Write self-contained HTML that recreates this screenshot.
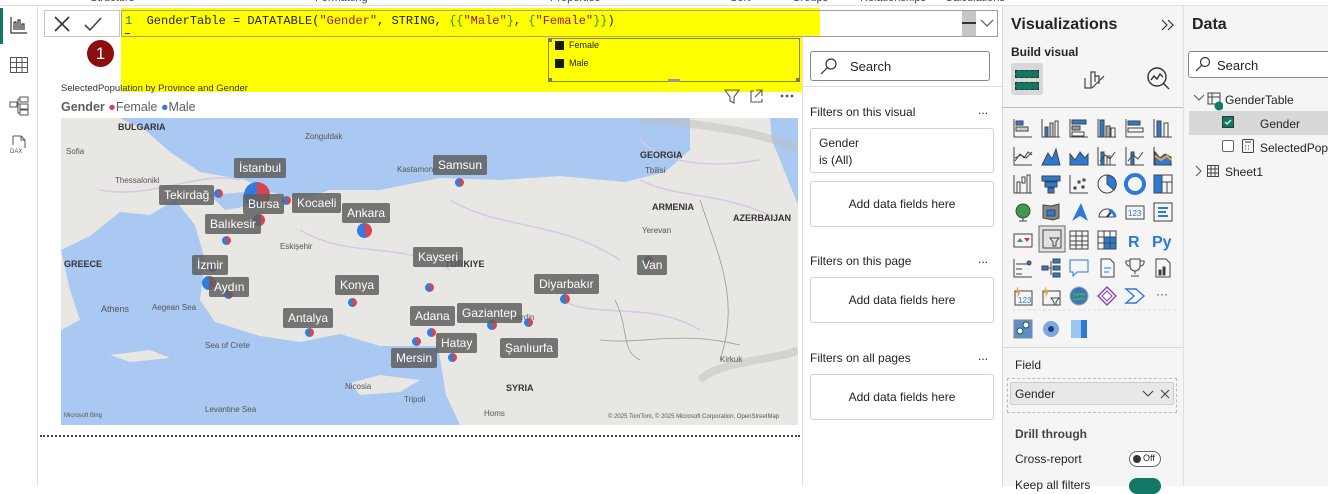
<!DOCTYPE html>
<html><head><meta charset="utf-8">
<style>
*{box-sizing:border-box;margin:0;padding:0}
body{width:1328px;height:486px;overflow:hidden;background:#fff;font-family:"Liberation Sans",sans-serif;position:relative;color:#252423}
.a{position:absolute}
.t{font-size:12px;white-space:nowrap}
.card{position:absolute;left:810px;width:184px;background:#fff;border:1px solid #d1d1d1;border-radius:3px;font-size:12px}
.add{text-align:center;line-height:44px}
.lbl{position:absolute;background:rgba(95,95,95,.85);color:#fff;font-size:12px;padding:3px 5px;border-radius:2px;white-space:nowrap}
.pie{position:absolute;width:9px;height:9px;border-radius:50%;background:conic-gradient(#d64550 0 45%,#2f7de1 45% 100%)}
.mt{position:absolute;font-size:8px;color:#555;white-space:nowrap}
.ic{position:absolute;width:22px;height:22px}
</style></head><body>
<!-- top ribbon remnant -->
<div class="a" style="left:0;top:0;width:1328px;height:6px;background:#fff;border-bottom:1px solid #e1dfdd"></div>
<div class="a t" style="left:90px;top:-8px;font-size:11px;color:#444">Structure</div>
<div class="a t" style="left:315px;top:-8px;font-size:11px;color:#444">Formatting</div>
<div class="a t" style="left:550px;top:-8px;font-size:11px;color:#444">Properties</div>
<div class="a t" style="left:730px;top:-8px;font-size:11px;color:#444">Sort</div>
<div class="a t" style="left:792px;top:-8px;font-size:11px;color:#444">Groups</div>
<div class="a t" style="left:860px;top:-8px;font-size:11px;color:#444">Relationships</div>
<div class="a t" style="left:945px;top:-8px;font-size:11px;color:#444">Calculations</div>

<!-- left nav -->
<div class="a" style="left:0;top:6px;width:38px;height:480px;background:#fff;border-right:1px solid #e1dfdd"></div>
<div class="a" style="left:0;top:8px;width:3px;height:36px;background:#117865"></div>
<svg class="a" style="left:10px;top:16px" width="18" height="18" viewBox="0 0 18 18" fill="none" stroke="#333" stroke-width="1.2"><path d="M1 1v16h16M4 14V6M4 6h2v8M8 14V4h2v10M12 14V8h2v6"/></svg>
<svg class="a" style="left:10px;top:57px" width="18" height="16" viewBox="0 0 18 16" fill="none" stroke="#555" stroke-width="1"><rect x=".5" y=".5" width="17" height="15"/><path d="M.5 5.5h17M.5 10.5h17M6.5 .5v15M12 .5v15"/></svg>
<svg class="a" style="left:9px;top:96px" width="20" height="20" viewBox="0 0 20 20" fill="none" stroke="#555" stroke-width="1"><rect x="1" y="6" width="7" height="5"/><rect x="11" y="1" width="8" height="5"/><rect x="11" y="8" width="8" height="5"/><rect x="11" y="14" width="8" height="5"/><path d="M8 8h3M9 8V3h2M9 8v9h2"/></svg>
<svg class="a" style="left:9px;top:135px" width="20" height="20" viewBox="0 0 20 20" fill="none" stroke="#555" stroke-width="1"><path d="M4 1h8l4 4v8M4 1v9M12 1v4h4"/><text x="1" y="18" font-size="6" fill="#555" stroke="none" font-family="Liberation Sans">DAX</text></svg>

<!-- formula bar -->
<div class="a" style="left:44px;top:10px;width:76px;height:27px;border:1px solid #c8c6c4;background:#fff"></div>
<svg class="a" style="left:52px;top:14px" width="60" height="20" viewBox="0 0 60 20" fill="none" stroke="#333" stroke-width="1.6"><path d="M3 3l14 14M17 3L3 17"/><path d="M33 11l5 5 11-12" stroke="#444"/></svg>
<div class="a" style="left:121px;top:8px;width:699px;height:84px;background:#ffff00"></div>
<div class="a" style="left:121px;top:10px;width:877px;height:27px;border:1px solid #a19f9d"></div>
<div class="a" style="left:820px;top:11px;width:177px;height:25px;background:#fff"></div>
<div class="a" style="left:962px;top:11px;width:14px;height:25px;background:#c8c6c4"></div>
<div class="a" style="left:962px;top:22px;width:14px;height:2px;background:#333"></div>
<svg class="a" style="left:980px;top:18px" width="14" height="10"><path d="M1 2l6 6 6-6" fill="none" stroke="#555" stroke-width="1.2"/></svg>
<div class="a" style="left:125px;top:14px;font-family:'Liberation Mono',monospace;font-size:12px;white-space:nowrap;color:#222"><span style="color:#237893">1</span>&nbsp; GenderTable = DATATABLE(<span style="color:#a31515">"Gender"</span>, STRING, <span style="color:#319331">{{</span><span style="color:#a31515">"Male"</span><span style="color:#319331">}</span>, <span style="color:#319331">{</span><span style="color:#a31515">"Female"</span><span style="color:#319331">}}</span>)</div>
<div class="a" style="left:125px;top:33px;width:5px;height:1px;background:#333"></div>
<!-- red marker -->
<div class="a" style="left:87px;top:40px;width:27px;height:27px;border-radius:50%;background:#8b0d0d;color:#fff;font-size:17px;text-align:center;line-height:27px">1</div>
<!-- slicer box -->
<div class="a" style="left:548px;top:38px;width:252px;height:44px;border:1px solid #8a8a00"></div>
<div class="a" style="left:548px;top:38px;width:4px;height:4px;background:#777"></div>
<div class="a" style="left:796px;top:78px;width:4px;height:4px;background:#777"></div>
<div class="a" style="left:548px;top:78px;width:4px;height:4px;background:#777"></div>
<div class="a" style="left:668px;top:79px;width:12px;height:3px;background:#999"></div>
<div class="a" style="left:555px;top:41px;width:9px;height:9px;background:#1a1a00"></div>
<div class="a t" style="left:569px;top:40px;font-size:9px">Female</div>
<div class="a" style="left:555px;top:59px;width:9px;height:9px;background:#1a1a00"></div>
<div class="a t" style="left:569px;top:58px;font-size:9px">Male</div>
<div class="a t" style="left:61px;top:83px;font-size:9.5px;color:#333">SelectedPopulation by Province and Gender</div>
<!-- visual header icons -->
<svg class="a" style="left:724px;top:88px" width="76" height="16" fill="none" stroke="#555" stroke-width="1.1"><path d="M1 2h14l-5 7v6l-4-2V9z"/><path d="M30 3h-3v11h11v-3M32 2h6v6M38 2l-7 7"/><circle cx="58" cy="8" r=".8" fill="#555"/><circle cx="63" cy="8" r=".8" fill="#555"/><circle cx="68" cy="8" r=".8" fill="#555"/></svg>
<div class="a t" style="left:61px;top:100px;font-size:12.5px;color:#605e5c"><b>Gender</b> <span style="color:#d64550">●</span>Female <span style="color:#2f7de1">●</span>Male</div>

<!-- map -->
<svg class="a" style="left:61px;top:118px" width="737" height="307" viewBox="61 118 737 307">
<rect x="61" y="118" width="737" height="307" fill="#e8e7e3"/>
<polygon fill="#a9c8f2" points="120,118 690,118 690,150 665,172 625,182 560,176 500,180 440,178 380,190 330,190 300,200 270,192 245,180 200,172 170,152 145,130"/>
<polygon fill="#a9c8f2" points="61,250 90,236 120,212 150,215 175,200 195,225 205,260 200,300 215,322 260,336 300,342 340,334 380,346 420,346 438,346 446,395 460,425 61,425 61,330 80,320 70,290"/>
<polygon fill="#e8e7e3" points="350,383 380,375 420,380 400,392 360,395"/>
<polygon fill="#e8e7e3" points="110,355 150,350 170,358 130,362"/>
<polygon fill="#a9c8f2" points="770,118 798,118 798,205 786,175 772,140"/>
<polygon fill="#a9c8f2" points="210,195 245,192 255,205 225,210"/>
<path d="M100,190 C150,200 200,170 240,180 M300,230 C350,260 400,240 450,270 M450,200 C500,230 560,220 620,260 M560,300 C600,320 650,300 700,330 M640,180 C680,200 720,190 780,220 M640,140 C660,160 700,170 760,160" stroke="#d6c8e6" stroke-width="1.5" fill="none"/>
<path d="M600,340 C640,345 680,330 740,345 M615,300 C630,330 620,350 640,360 M700,200 C720,260 740,300 720,360" stroke="#999" stroke-width=".8" fill="none"/>
<path d="M640,118 C700,125 760,130 798,150 M700,380 C720,360 780,360 798,350" stroke="#c0c0bd" stroke-width="8" fill="none" opacity=".5"/>
</svg>
<div class="mt" style="left:118px;top:122px;font-size:9px;color:#333;font-weight:bold">BULGARIA</div>
<div class="mt" style="left:640px;top:150px;font-size:9px;color:#333;font-weight:bold">GEORGIA</div>
<div class="mt" style="left:652px;top:202px;font-size:9px;color:#333;font-weight:bold">ARMENIA</div>
<div class="mt" style="left:733px;top:213px;font-size:9px;color:#333;font-weight:bold">AZERBAIJAN</div>
<div class="mt" style="left:64px;top:259px;font-size:9px;color:#333;font-weight:bold">GREECE</div>
<div class="mt" style="left:445px;top:259px;font-size:9px;color:#333;font-weight:bold">TÜRKIYE</div>
<div class="mt" style="left:506px;top:383px;font-size:9px;color:#333;font-weight:bold">SYRIA</div>
<div class="mt" style="left:66px;top:147px">Sofia</div><div class="mt" style="left:115px;top:176px">Thessaloniki</div>
<div class="mt" style="left:101px;top:304px;font-size:9px">Athens</div><div class="mt" style="left:152px;top:303px">Aegean Sea</div>
<div class="mt" style="left:205px;top:341px">Sea of Crete</div><div class="mt" style="left:205px;top:405px">Levantine Sea</div>
<div class="mt" style="left:345px;top:382px">Nicosia</div><div class="mt" style="left:404px;top:395px">Tripoli</div>
<div class="mt" style="left:645px;top:166px">Tbilisi</div><div class="mt" style="left:642px;top:226px">Yerevan</div>
<div class="mt" style="left:280px;top:242px">Eskişehir</div><div class="mt" style="left:397px;top:165px">Kastamonu</div>
<div class="mt" style="left:305px;top:132px">Zonguldak</div><div class="mt" style="left:720px;top:355px">Kirkuk</div>
<div class="mt" style="left:484px;top:409px">Homs</div><div class="mt" style="left:510px;top:313px">Mardin</div>
<div class="mt" style="left:64px;top:413px;font-size:6px">Microsoft Bing</div>
<div class="mt" style="left:608px;top:414px;font-size:6px">© 2025 TomTom, © 2025 Microsoft Corporation, OpenStreetMap</div>
<!-- pies -->
<div class="pie" style="left:244px;top:182px;width:26px;height:26px"></div>
<div class="pie" style="left:214px;top:189px"></div><div class="pie" style="left:282px;top:196px"></div>
<div class="pie" style="left:253px;top:214px;width:12px;height:12px"></div><div class="pie" style="left:222px;top:236px"></div>
<div class="pie" style="left:357px;top:223px;width:15px;height:15px"></div><div class="pie" style="left:455px;top:178px"></div>
<div class="pie" style="left:202px;top:276px;width:14px;height:14px"></div><div class="pie" style="left:208px;top:263px"></div>
<div class="pie" style="left:224px;top:290px"></div><div class="pie" style="left:348px;top:298px"></div>
<div class="pie" style="left:425px;top:283px"></div><div class="pie" style="left:305px;top:328px"></div>
<div class="pie" style="left:644px;top:256px"></div><div class="pie" style="left:560px;top:294px;width:10px;height:10px"></div>
<div class="pie" style="left:427px;top:328px"></div><div class="pie" style="left:487px;top:320px;width:10px;height:10px"></div>
<div class="pie" style="left:524px;top:318px"></div><div class="pie" style="left:412px;top:337px"></div>
<div class="pie" style="left:448px;top:353px"></div>
<!-- labels -->
<div class="lbl" style="left:234px;top:158px">İstanbul</div>
<div class="lbl" style="left:433px;top:155px">Samsun</div>
<div class="lbl" style="left:159px;top:185px">Tekirdağ</div>
<div class="lbl" style="left:243px;top:194px">Bursa</div>
<div class="lbl" style="left:292px;top:193px">Kocaeli</div>
<div class="lbl" style="left:342px;top:203px">Ankara</div>
<div class="lbl" style="left:205px;top:214px">Balıkesir</div>
<div class="lbl" style="left:413px;top:247px">Kayseri</div>
<div class="lbl" style="left:192px;top:255px">İzmir</div>
<div class="lbl" style="left:637px;top:255px">Van</div>
<div class="lbl" style="left:209px;top:277px">Aydın</div>
<div class="lbl" style="left:335px;top:275px">Konya</div>
<div class="lbl" style="left:534px;top:274px">Diyarbakır</div>
<div class="lbl" style="left:283px;top:308px">Antalya</div>
<div class="lbl" style="left:410px;top:306px">Adana</div>
<div class="lbl" style="left:457px;top:303px">Gaziantep</div>
<div class="lbl" style="left:436px;top:333px">Hatay</div>
<div class="lbl" style="left:500px;top:338px">Şanlıurfa</div>
<div class="lbl" style="left:391px;top:348px">Mersin</div>
<div class="a" style="left:40px;top:435px;width:760px;border-top:2px dotted #444"></div>

<!-- filters pane -->
<div class="a" style="left:802px;top:37px;width:200px;height:449px;background:#fff;border-left:1px solid #e1dfdd"></div>
<div class="a" style="left:810px;top:51px;width:180px;height:30px;border:1px solid #8a8886;border-radius:3px;background:#fff"></div>
<svg class="a" style="left:820px;top:57px" width="18" height="18" fill="none" stroke="#333" stroke-width="1.2"><circle cx="11" cy="7" r="5"/><path d="M7.5 10.5L1 17"/></svg>
<div class="a t" style="left:850px;top:59px;font-size:13px">Search</div>
<div class="a" style="left:803px;top:86px;width:199px;border-top:1px solid #e1dfdd"></div>
<div class="a t" style="left:810px;top:105px">Filters on this visual</div><div class="a t" style="left:978px;top:103px">...</div>
<div class="card" style="top:128px;height:45px;padding:6px 8px;line-height:17px">Gender<br>is (All)</div>
<div class="card add" style="top:181px;height:46px">Add data fields here</div>
<div class="a t" style="left:810px;top:254px">Filters on this page</div><div class="a t" style="left:978px;top:252px">...</div>
<div class="card add" style="top:277px;height:46px">Add data fields here</div>
<div class="a t" style="left:810px;top:351px">Filters on all pages</div><div class="a t" style="left:978px;top:349px">...</div>
<div class="card add" style="top:374px;height:46px">Add data fields here</div>

<!-- visualizations pane -->
<div class="a" style="left:1002px;top:6px;width:182px;height:480px;background:#f5f5f5;border-left:1px solid #d8d8d8;border-right:1px solid #e1dfdd"></div>
<div class="a t" style="left:1011px;top:16px;font-size:16px;font-weight:bold;color:#252423">Visualizations</div>
<svg class="a" style="left:1161px;top:19px" width="14" height="12" fill="none" stroke="#333" stroke-width="1.2"><path d="M1 1l5 5-5 5M7 1l5 5-5 5"/></svg>
<div class="a t" style="left:1011px;top:45px;font-size:12px;font-weight:bold">Build visual</div>
<div class="a" style="left:1011px;top:63px;width:32px;height:32px;background:#d8d8d8;border-radius:3px"></div>
<div class="a" style="left:1015px;top:70px;width:24px;height:8px;background:#117865;border:1px dashed #333"></div>
<div class="a" style="left:1015px;top:82px;width:24px;height:8px;background:#117865;border:1px dashed #333"></div>
<svg class="a" style="left:1082px;top:66px" width="24" height="26" fill="none" stroke="#444" stroke-width="1.2"><path d="M3 12v10h6V6h4v10M13 10h4v8M10 22l12-12"/></svg>
<svg class="a" style="left:1146px;top:66px" width="26" height="26" fill="none" stroke="#333" stroke-width="1.4"><circle cx="11" cy="11" r="9"/><path d="M17 17l6 6M5 14l3-4 3 3 3-5 3 3"/></svg>
<div class="a" style="left:1003px;top:107px;width:180px;border-top:1px solid #bdbdbd"></div>
<svg class="a" style="left:1003px;top:114px" width="180" height="228" fill="none" stroke="#444" stroke-width="1">
<g transform="translate(10,4)"><path d="M1 1v18h18"/><rect x="3" y="3" width="7" height="4" fill="#2b7bd4"/><rect x="3" y="9" width="12" height="4" fill="#ccc"/></g>
<g transform="translate(38,4)"><path d="M1 1v18h18"/><rect x="4" y="9" width="3" height="10" fill="#2b7bd4"/><rect x="9" y="5" width="3" height="14" fill="#ccc"/><rect x="14" y="3" width="3" height="16"/></g>
<g transform="translate(66,4)"><path d="M1 1v18h18"/><rect x="3" y="2" width="14" height="4" fill="#2b7bd4"/><rect x="3" y="8" width="8" height="4" fill="#999"/><rect x="3" y="14" width="12" height="4"/></g>
<g transform="translate(94,4)"><path d="M1 1v18h18"/><rect x="3" y="2" width="4" height="17" fill="#2b7bd4"/><rect x="9" y="8" width="4" height="11" fill="#aaa"/><rect x="14" y="10" width="4" height="9"/></g>
<g transform="translate(122,4)"><path d="M1 1v18h18"/><rect x="3" y="3" width="12" height="4" fill="#2b7bd4"/><rect x="3" y="10" width="15" height="4"/></g>
<g transform="translate(150,4)"><path d="M1 1v18h18"/><rect x="4" y="3" width="4" height="16" fill="#2b7bd4"/><rect x="11" y="5" width="4" height="14"/></g>
<g transform="translate(10,32)"><path d="M1 1v18h18M2 15l5-7 4 4 4-6 4 3M2 12l6-3 5 3 6-6"/></g>
<g transform="translate(38,32)"><path d="M1 19l6-12 4 6 4-10 4 16z" fill="#2b7bd4"/></g>
<g transform="translate(66,32)"><path d="M1 8l5 6 5-8 5 6 3-4v11H1z" fill="#2b7bd4"/></g>
<g transform="translate(94,32)"><path d="M1 1v18h18"/><rect x="4" y="6" width="3" height="13" fill="#2b7bd4"/><rect x="10" y="10" width="3" height="9"/><path d="M3 15l5-6 5 4 5-7"/></g>
<g transform="translate(122,32)"><path d="M1 1v18h18"/><rect x="6" y="6" width="3" height="13" fill="#2b7bd4"/><path d="M3 15l5-6 5 4 5-7"/></g>
<g transform="translate(150,32)"><path d="M1 1v18h18"/><path d="M2 6l5 6 5-4 6 3v8H2z" fill="#2b7bd4"/><path d="M2 10l6 4 6-4 4 4" stroke="#e8a33d" stroke-width="2"/></g>
<g transform="translate(10,60)"><path d="M1 1v18h18"/><rect x="4" y="8" width="3" height="11"/><rect x="9" y="3" width="3" height="6"/><rect x="14" y="1" width="3" height="18"/></g>
<g transform="translate(38,60)"><rect x="1" y="2" width="18" height="5" fill="#2b7bd4"/><rect x="4" y="8" width="12" height="5" fill="#2b7bd4"/><rect x="7" y="14" width="6" height="5" fill="#2b7bd4"/></g>
<g transform="translate(66,60)"><path d="M1 1v18h18"/><rect x="5" y="13" width="2" height="2" fill="#333"/><rect x="9" y="7" width="2" height="2" fill="#2b7bd4"/><rect x="14" y="5" width="2" height="2" fill="#2b7bd4"/><rect x="13" y="12" width="2" height="2" fill="#333"/></g>
<g transform="translate(94,60)"><circle cx="10" cy="10" r="9"/><path d="M10 1a9 9 0 0 1 7 15l-7-6z" fill="#2b7bd4"/></g>
<g transform="translate(122,60)"><circle cx="10" cy="10" r="9" stroke="#2b7bd4" stroke-width="4"/></g>
<g transform="translate(150,60)"><rect x="1" y="1" width="18" height="18"/><rect x="1" y="1" width="8" height="18" fill="#2b7bd4"/><path d="M9 8h10M14 8v11"/></g>
<g transform="translate(10,88)"><circle cx="10" cy="9" r="7" fill="#3c9b4a"/><path d="M10 16v3M6 19h8"/></g>
<g transform="translate(38,88)"><path d="M2 3l8 1 8-2v14l-6 2-10-2z" fill="#888"/><path d="M6 8l8 0 0 6-8 0z" fill="#2b7bd4"/></g>
<g transform="translate(66,88)"><path d="M12 1L3 19l8-5 8 5z" fill="#2b7bd4" stroke="none"/></g>
<g transform="translate(94,88)"><path d="M2 15a8 8 0 0 1 16 0z"/><path d="M10 15l4-5" stroke="#333" stroke-width="2"/><path d="M12 8a8 8 0 0 1 6 7" stroke="#2b7bd4" stroke-width="3"/></g>
<g transform="translate(122,88)"><rect x="1" y="4" width="18" height="13"/><text x="3" y="14" font-size="8" fill="#2b7bd4" stroke="none" font-family="Liberation Sans">123</text></g>
<g transform="translate(150,88)"><rect x="1" y="1" width="18" height="18"/><path d="M5 6h10M5 10h8M5 14h10" stroke="#2b7bd4" stroke-width="2"/></g>
<g transform="translate(10,116)"><rect x="1" y="4" width="18" height="13"/><path d="M4 12l3-4 3 4z" fill="#3c9b4a" stroke="none"/><path d="M11 8h6l-3 4z" fill="#d33" stroke="none"/></g>
<g transform="translate(36,112)"><rect x="0" y="0" width="26" height="26" fill="#e1e1e1" stroke="#666"/><rect x="4" y="4" width="18" height="18"/><path d="M11 12h9l-3 4v4h-3v-4z"/></g>
<g transform="translate(66,116)"><rect x="1" y="1" width="18" height="18"/><path d="M1 6h18M1 11h18M1 15h18M7 1v18M13 1v18"/></g>
<g transform="translate(94,116)"><rect x="1" y="1" width="18" height="18"/><rect x="7" y="7" width="12" height="12" fill="#2b7bd4"/><path d="M1 7h18M1 13h18M7 1v18M13 1v18"/></g>
<text x="125" y="133" font-size="16" font-weight="bold" fill="#2b7bd4" stroke="none" font-family="Liberation Sans">R</text>
<text x="149" y="133" font-size="16" font-weight="bold" fill="#2b7bd4" stroke="none" font-family="Liberation Sans">Py</text>
<g transform="translate(10,144)"><path d="M1 1v18h18M3 6h12M3 11h6M3 16h6"/><circle cx="16" cy="5" r="2" fill="#2b7bd4"/></g>
<g transform="translate(38,144)"><rect x="1" y="8" width="6" height="4" fill="#2b7bd4"/><rect x="12" y="1" width="7" height="4" fill="#2b7bd4"/><rect x="12" y="8" width="7" height="4" fill="#2b7bd4"/><rect x="12" y="15" width="7" height="4" fill="#2b7bd4"/><path d="M7 10h3M10 3v14"/></g>
<g transform="translate(66,144)"><path d="M1 2h18v12H8l-4 4v-4H1z" stroke="#2b7bd4"/></g>
<g transform="translate(94,144)"><path d="M4 1h9l4 4v14H4z"/><path d="M7 10h7M7 14h5" stroke="#2b7bd4"/></g>
<g transform="translate(122,144)"><path d="M5 1h10v7a5 5 0 0 1-10 0zM5 3H1a4 4 0 0 0 4 5M15 3h4a4 4 0 0 1-4 5M10 13v3M6 18h8"/></g>
<g transform="translate(150,144)"><path d="M3 1h10l4 4v14H3z"/><rect x="6" y="12" width="2" height="5" fill="#333"/><rect x="10" y="9" width="2" height="8" fill="#333"/></g>
<g transform="translate(10,172)"><rect x="2" y="5" width="17" height="14"/><text x="5" y="17" font-size="8" fill="#2b7bd4" stroke="none" font-family="Liberation Sans">123</text><path d="M5 0l-3 7h3l-1 5 4-7H5z" fill="#e8a33d" stroke="none"/></g>
<g transform="translate(38,172)"><rect x="2" y="5" width="17" height="14"/><path d="M10 12h8l-3 4v3h-2v-3z"/><path d="M5 0l-3 7h3l-1 5 4-7H5z" fill="#e8a33d" stroke="none"/></g>
<g transform="translate(66,172)"><circle cx="10" cy="10" r="9" fill="#3a78b8" stroke="#aaa"/><path d="M4 8c4 2 8-2 12 1M4 13c4 2 8-2 12 0" stroke="#4caf50" stroke-width="1.5"/></g>
<g transform="translate(94,172)"><path d="M10 1l9 9-9 9-9-9z" stroke="#8e44ad" stroke-width="1.4"/><path d="M10 5l5 5-5 5-5-5z" stroke="#8e44ad"/></g>
<g transform="translate(122,172)"><path d="M1 3h10l8 7-8 7H1l8-7z" stroke="#2b7bd4" stroke-width="1.4"/></g>
<text x="153" y="184" font-size="12" fill="#333" stroke="none" font-family="Liberation Sans">···</text>
<path d="M10 196h165" stroke="#ddd" stroke-dasharray="3 2"/>
<g transform="translate(10,205)"><rect x="1" y="1" width="18" height="18" fill="#5a8fc9" stroke="#888"/><circle cx="7" cy="12" r="3" fill="#dff"/><circle cx="13" cy="6" r="3" fill="#dff"/></g>
<g transform="translate(38,205)"><circle cx="10" cy="10" r="8" fill="#7da7e0" stroke="none"/><circle cx="10" cy="10" r="3" fill="#1f3f7a" stroke="none"/></g>
<g transform="translate(66,205)"><rect x="2" y="1" width="16" height="18" fill="#9cc5f0" stroke="none"/><rect x="12" y="1" width="6" height="18" fill="#2b7bd4" stroke="none"/></g>
</svg>
<div class="a" style="left:1003px;top:347px;width:180px;border-top:1px solid #d8d8d8"></div>
<div class="a t" style="left:1015px;top:358px">Field</div>
<div class="a" style="left:1007px;top:378px;width:170px;height:35px;border:1px dashed #bbb"></div>
<div class="a" style="left:1010px;top:382px;width:164px;height:23px;background:#e8e8e8;border:1px solid #ccc;border-radius:2px"></div>
<div class="a t" style="left:1015px;top:387px">Gender</div>
<svg class="a" style="left:1142px;top:388px" width="30" height="12" fill="none" stroke="#444" stroke-width="1.1"><path d="M1 3l5 5 5-5M19 2l8 8M27 2l-8 8"/></svg>
<div class="a t" style="left:1015px;top:427px;font-weight:bold;color:#444">Drill through</div>
<div class="a t" style="left:1015px;top:452px">Cross-report</div>
<div class="a" style="left:1129px;top:451px;width:32px;height:16px;border:1px solid #666;border-radius:8px;background:#fff"></div>
<div class="a" style="left:1133px;top:455px;width:8px;height:8px;border-radius:50%;background:#333"></div>
<div class="a t" style="left:1143px;top:453px;font-size:9px">Off</div>
<div class="a t" style="left:1015px;top:478px">Keep all filters</div>
<div class="a" style="left:1129px;top:478px;width:32px;height:16px;border-radius:8px;background:#117865"></div>

<!-- data pane -->
<div class="a" style="left:1184px;top:6px;width:144px;height:480px;background:#f5f5f5"></div>
<div class="a t" style="left:1192px;top:16px;font-size:16px;font-weight:bold">Data</div>
<div class="a" style="left:1188px;top:51px;width:145px;height:27px;border:1px solid #8a8886;border-radius:3px;background:#fff"></div>
<svg class="a" style="left:1195px;top:56px" width="16" height="16" fill="none" stroke="#333" stroke-width="1.2"><circle cx="10" cy="6" r="4.5"/><path d="M6.8 9.2L1 15"/></svg>
<div class="a t" style="left:1217px;top:58px;font-size:13px">Search</div>
<svg class="a" style="left:1193px;top:93px" width="12" height="10" fill="none" stroke="#555"><path d="M1 2l5 5 5-5"/></svg>
<svg class="a" style="left:1207px;top:92px" width="16" height="20" fill="none" stroke="#444"><rect x="1" y="1" width="12" height="11"/><path d="M1 5h12M5 1v11"/><circle cx="12" cy="14" r="4.5" fill="#117865" stroke="none"/></svg>
<div class="a t" style="left:1225px;top:93px">GenderTable</div>
<div class="a" style="left:1189px;top:111px;width:139px;height:24px;background:#d8d8d8"></div>
<div class="a" style="left:1222px;top:116px;width:12px;height:12px;background:#117865;border:1px solid #333"></div>
<svg class="a" style="left:1223px;top:117px" width="10" height="10"><path d="M2 5l2 2 4-4" stroke="#fff" fill="none" stroke-width="1.3"/></svg>
<div class="a t" style="left:1260px;top:117px">Gender</div>
<div class="a" style="left:1222px;top:140px;width:12px;height:12px;background:#fff;border:1px solid #666;border-radius:2px"></div>
<svg class="a" style="left:1242px;top:139px" width="12" height="14" fill="none" stroke="#444"><rect x=".5" y=".5" width="11" height="13" rx="1"/><path d="M3 3h6M3 7h1M6 7h1M9 7h0M3 10h1M6 10h1"/></svg>
<div class="a t" style="left:1260px;top:141px">SelectedPopulation</div>
<svg class="a" style="left:1194px;top:165px" width="8" height="12" fill="none" stroke="#555"><path d="M2 1l5 5-5 5"/></svg>
<svg class="a" style="left:1207px;top:165px" width="12" height="12" fill="none" stroke="#444"><rect x=".5" y=".5" width="11" height="11"/><path d="M.5 4h11M.5 8h11M4 .5v11M8 .5v11"/></svg>
<div class="a t" style="left:1225px;top:165px">Sheet1</div>
</body></html>
